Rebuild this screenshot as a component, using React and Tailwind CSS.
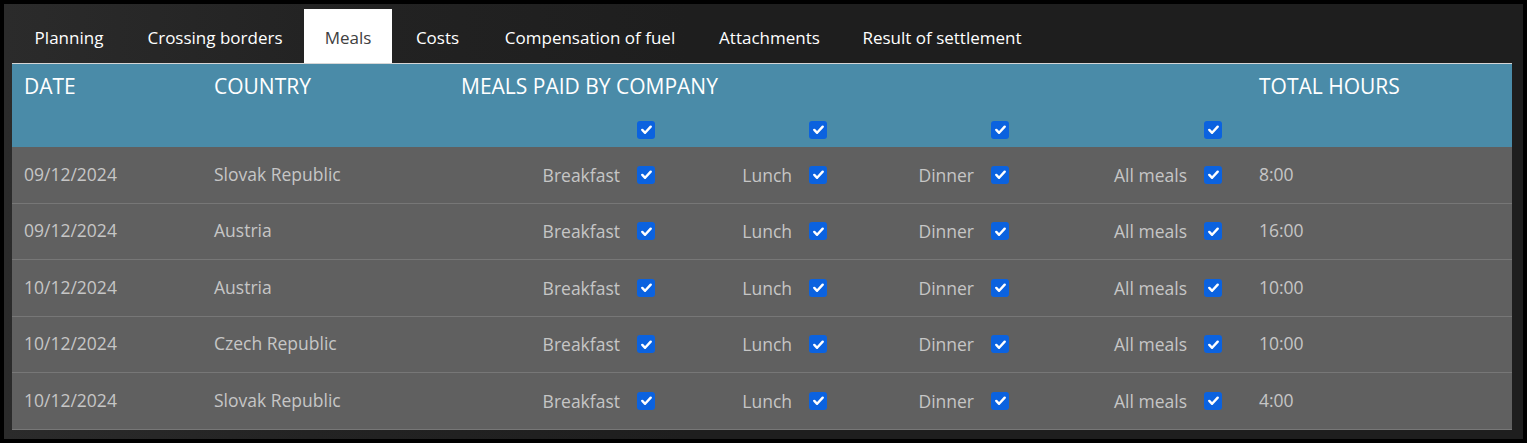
import React from "react";

const tabs = [
  { label: "Planning", w: "w-[114px]" },
  { label: "Crossing borders", w: "w-[178px]" },
  { label: "Meals", w: "w-[88px]", active: true },
  { label: "Costs", w: "w-[91px]" },
  { label: "Compensation of fuel", w: "w-[214px]" },
  { label: "Attachments", w: "w-[145px]" },
  { label: "Result of settlement", w: "w-[200px]" },
];

const rows = [
  { date: "09/12/2024", country: "Slovak Republic", hours: "8:00" },
  { date: "09/12/2024", country: "Austria", hours: "16:00" },
  { date: "10/12/2024", country: "Austria", hours: "10:00" },
  { date: "10/12/2024", country: "Czech Republic", hours: "10:00" },
  { date: "10/12/2024", country: "Slovak Republic", hours: "4:00" },
];

const meals = ["Breakfast", "Lunch", "Dinner", "All meals"];

const gridCols = "grid grid-cols-[190px_247px_194px_172px_182px_213px_1fr] pl-3";

const Checkbox = () => (
  <span className="inline-flex h-[18px] w-[18px] shrink-0 items-center justify-center rounded-[3px] bg-[#0b62df]">
    <svg viewBox="0 0 16 16" className="h-[15px] w-[15px]" fill="none" stroke="white" strokeWidth={2.6} strokeLinecap="round" strokeLinejoin="round">
      <path d="M3.5 8.5l3 3 6-6.5" />
    </svg>
  </span>
);

const App = () => {
  return (
    <div
      className="h-[443px] w-[1527px] overflow-hidden border-[4px] border-black bg-[linear-gradient(90deg,#2b2b2b_0%,#232323_20%,#1e1e1e_45%,#1e1e1e_100%)]"
      style={{ fontFamily: '"Open Sans", "Noto Sans", sans-serif' }}
    >
      {/* Tabs */}
      <div className="flex pl-[8px] pt-[5px]">
        {tabs.map((t) => (
          <div
            key={t.label}
            className={`${t.w} flex h-[54px] items-center justify-center pt-[3px] text-[17px] ${t.active ? "bg-white text-[#404040]" : "text-white"}`}
          >
            {t.label}
          </div>
        ))}
      </div>

      {/* Table */}
      <div className="ml-[8px] mr-[11px] border-t border-[#d6d6d6]">
        <div className="h-[83px] bg-[#4a8ba8] text-white">
          <div className={`${gridCols} h-[45px] items-center text-[21px]`}>
            <div>DATE</div>
            <div>COUNTRY</div>
            <div className="col-span-4">MEALS PAID BY COMPANY</div>
            <div className="pl-[37px]">TOTAL HOURS</div>
          </div>
          <div className={`${gridCols} h-[38px] items-center pt-[3px]`}>
            <div />
            <div />
            {meals.map((m) => (
              <div key={m} className="flex justify-end">
                <Checkbox />
              </div>
            ))}
            <div />
          </div>
        </div>

        {rows.map((r, i) => (
          <div
            key={i}
            className={`${gridCols} h-[56.5px] items-center border-b border-[#777777] bg-[#606060] text-[17.5px] text-[#c6c6c6]`}
          >
            <div className="mb-[2px]">{r.date}</div>
            <div className="mb-[2px]">{r.country}</div>
            {meals.map((m) => (
              <div key={m} className="flex items-center justify-end gap-[17px]">
                <span>{m}</span>
                <Checkbox />
              </div>
            ))}
            <div className="mb-[2px] pl-[37px]">{r.hours}</div>
          </div>
        ))}
      </div>
    </div>
  );
};

export default App;
